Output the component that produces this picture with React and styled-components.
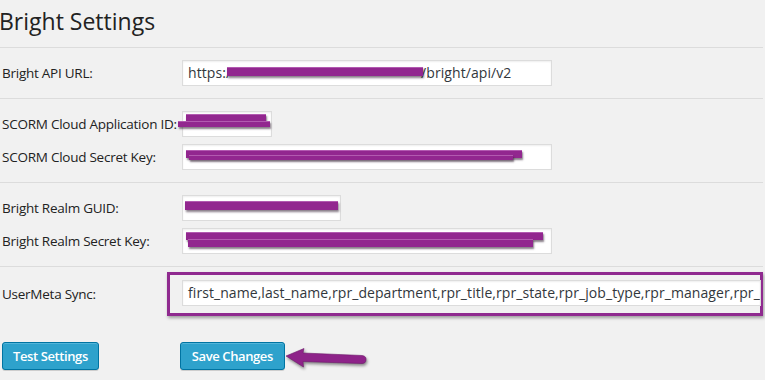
import React from "react";
import styled, { createGlobalStyle } from "styled-components";

const Global = createGlobalStyle`
  html, body { margin: 0; padding: 0; background: #f1f1f1; }
  body { font-family: "Open Sans", "Noto Sans", sans-serif; color: #222; }
  * { box-sizing: border-box; }
`;

const Page = styled.div`
  width: 765px;
  height: 380px;
  overflow: hidden;
  padding-left: 2px;
`;

const Title = styled.h1`
  margin: 0 0 0 -3px;
  height: 47px;
  padding-top: 7px;
  font-size: 23px;
  font-weight: 400;
  line-height: 29px;
  color: #222;
`;

const Rule = styled.div`
  height: 1px;
  background: #dcdcdc;
  margin-left: -2px;
  width: 763px;
`;

const Section = styled.div`
  display: grid;
  grid-template-columns: 180px 1fr;
  row-gap: 7px;
  padding: 12px 0;
  align-items: center;
`;

const Label = styled.div`
  font-size: 13.5px;
  letter-spacing: -0.25px;
  color: #222;
  white-space: nowrap;
  line-height: 20px;
`;

const Field = styled.div`
  position: relative;
  width: ${(p) => p.$w}px;
  height: 26px;
  background: #fff;
  border: 1px solid #dcdcdc;
  box-shadow: inset 0 1px 2px rgba(0, 0, 0, 0.07);
  font-size: 14px;
  letter-spacing: 0.07px;
  line-height: 24px;
  padding: 0 5px;
  color: #32373c;
  white-space: nowrap;
  overflow: ${(p) => (p.$clip ? "hidden" : "visible")};
`;

const Redacted = styled.span`
  display: inline-block;
  position: relative;
  width: ${(p) => p.$w}px;
  height: 10px;
  vertical-align: middle;
  margin: 0 -2px 0 -4px;
`;

const Scribble = styled.span`
  position: absolute;
  left: ${(p) => p.$l}px;
  top: ${(p) => p.$t}px;
  width: ${(p) => p.$w}px;
  height: ${(p) => p.$h}px;
  background: #92278f;
  border-top: 1px solid #b25ab0;
  box-shadow: 1px 2px 2px rgba(40, 20, 40, 0.55);
`;

const HighlightBox = styled.div`
  grid-column: 1 / span 2;
  display: grid;
  grid-template-columns: 178px 1fr;
  align-items: center;
`;

const Frame = styled.div`
  margin-left: -13px;
  width: 596px;
  height: 44px;
  border: 3px solid #8f2a8f;
  box-shadow: 1px 2px 3px rgba(0, 0, 0, 0.35);
  padding: 5px 0 0 12px;
`;

const LastSection = styled(Section)`
  padding: 5px 0 0 0;
`;

const Buttons = styled.div`
  display: flex;
  align-items: flex-start;
  padding-top: 26px;
`;

const Button = styled.button`
  height: 28px;
  padding: 0 ${(p) => p.$px}px;
  margin-right: ${(p) => p.$mr || 0}px;
  background: #2ea2cc;
  border: 1px solid #0074a2;
  border-radius: 3px;
  box-shadow: inset 0 1px 0 rgba(120, 200, 230, 0.5), 0 1px 0 rgba(0, 0, 0, 0.15);
  color: #fff;
  font-family: "Open Sans", "Noto Sans", sans-serif;
  font-weight: 600;
  font-size: 13px;
  letter-spacing: -0.4px;
  line-height: 26px;
  cursor: pointer;
`;

const Arrow = () => (
  <svg width="84" height="30" viewBox="0 0 84 30" style={{ filter: "drop-shadow(1px 2px 1.5px rgba(0,0,0,0.45))" }}>
    <path
      d="M1 14 L19 6.5 L18 11 L77 13.5 Q81.5 14 81 18 Q80.5 22 76 21.5 L18 19.5 L18.5 25 Z"
      fill="#8e2389"
      stroke="#6e1a6b"
      strokeWidth="0.6"
      strokeLinejoin="round"
    />
  </svg>
);

export default function App() {
  return (
    <>
      <Global />
      <Page>
        <Title>Bright Settings</Title>
        <Rule />
        <Section>
          <Label>Bright API URL:</Label>
          <Field $w={370}>
            https:/
            <Redacted $w={196}>
              <Scribble $l={0} $t={-2} $w={196} $h={9} />
            </Redacted>
            /bright/api/v2
          </Field>
        </Section>
        <Rule />
        <Section>
          <Label>SCORM Cloud Application ID:</Label>
          <Field $w={90}>
            <Scribble $l={3} $t={2} $w={80} $h={8} />
            <Scribble $l={-5} $t={9} $w={92} $h={6} />
          </Field>
          <Label>SCORM Cloud Secret Key:</Label>
          <Field $w={370}>
            <Scribble $l={3} $t={5} $w={336} $h={8} />
            <Scribble $l={6} $t={10} $w={324} $h={5} />
          </Field>
        </Section>
        <Rule />
        <Section>
          <Label>Bright Realm GUID:</Label>
          <Field $w={159}>
            <Scribble $l={2} $t={5} $w={153} $h={9} />
          </Field>
          <Label>Bright Realm Secret Key:</Label>
          <Field $w={370}>
            <Scribble $l={3} $t={3} $w={357} $h={8} />
            <Scribble $l={5} $t={10} $w={345} $h={8} />
          </Field>
        </Section>
        <Rule />
        <LastSection>
          <HighlightBox>
            <Label>UserMeta Sync:</Label>
            <Frame>
              <Field $w={579} $clip>
                first_name,last_name,rpr_department,rpr_title,rpr_state,rpr_job_type,rpr_manager,rpr_location
              </Field>
            </Frame>
          </HighlightBox>
        </LastSection>
        <Buttons>
          <Button $px={10} $mr={81}>Test Settings</Button>
          <Button $px={11}>Save Changes</Button>
          <Arrow />
        </Buttons>
      </Page>
    </>
  );
}
